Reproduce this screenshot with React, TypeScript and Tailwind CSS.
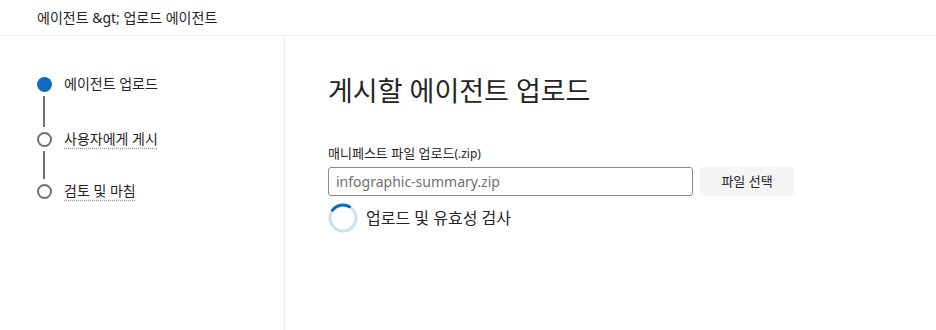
import React from 'react';

const font = { fontFamily: '"Noto Sans", "Noto Sans CJK KR", sans-serif' };

function StepDot({ active }: { active?: boolean }) {
  return active ? (
    <span className="block h-[15px] w-[15px] rounded-full bg-[#0f6cbd]" />
  ) : (
    <span className="block h-[15px] w-[15px] rounded-full border-2 border-[#707070] bg-white" />
  );
}

function Spinner() {
  return (
    <svg width="30" height="30" viewBox="0 0 30 30" className="shrink-0">
      <circle cx="15" cy="15" r="13" fill="none" stroke="#c7e0f4" strokeWidth="3" />
      <path d="M4.5 7.2 A13 13 0 0 1 21.5 3.7" fill="none" stroke="#0f6cbd" strokeWidth="3" strokeLinecap="round" />
    </svg>
  );
}

export default function App() {
  return (
    <div className="h-[330px] w-[936px] bg-white text-[#242424]" style={font}>
      {/* Breadcrumb */}
      <header className="flex h-[36px] items-center border-b border-[#f0f0f0] pl-[37px] text-[14px]">
        에이전트 &amp;gt; 업로드 에이전트
      </header>

      <div className="flex h-[294px]">
        {/* Steps */}
        <aside className="w-[285px] shrink-0 border-r border-[#ebebeb] pl-[37px] pt-[40px]">
          <div className="flex items-center gap-[12px]">
            <StepDot active />
            <span className="text-[14px] leading-[16px]">에이전트 업로드</span>
          </div>
          <div className="my-[4px] ml-[6px] h-[31px] w-[2px] bg-[#707070]" />
          <div className="flex items-center gap-[12px]">
            <StepDot />
            <span className="text-[14px] leading-[16px] underline decoration-dotted decoration-[#9a9a9a] underline-offset-[4px]">사용자에게 게시</span>
          </div>
          <div className="my-[4px] ml-[6px] h-[28px] w-[2px] bg-[#707070]" />
          <div className="flex items-center gap-[12px]">
            <StepDot />
            <span className="text-[14px] leading-[16px] underline decoration-dotted decoration-[#9a9a9a] underline-offset-[4px]">검토 및 마침</span>
          </div>
        </aside>

        {/* Main */}
        <main className="flex-1 pl-[43px] pt-[37px]">
          <h1 className="text-[27px] leading-[36px] font-normal">게시할 에이전트 업로드</h1>
          <label className="mt-[34px] block text-[13px] leading-[20px]">
            매니페스트 파일 업로드<span className="text-[12px]">(.zip)</span>
          </label>
          <div className="mt-[3px] flex gap-[7px]">
            <div className="flex h-[29px] w-[365px] items-center rounded-[3px] border border-[#8a8a8a] px-[7px] text-[14px] text-[#707070]">
              infographic-summary.zip
            </div>
            <button className="h-[29px] w-[94px] rounded-[4px] bg-[#f5f5f5] text-[13px]">파일 선택</button>
          </div>
          <div className="mt-[7px] flex items-center gap-[8px]">
            <Spinner />
            <span className="text-[16px]">업로드 및 유효성 검사</span>
          </div>
        </main>
      </div>
    </div>
  );
}
